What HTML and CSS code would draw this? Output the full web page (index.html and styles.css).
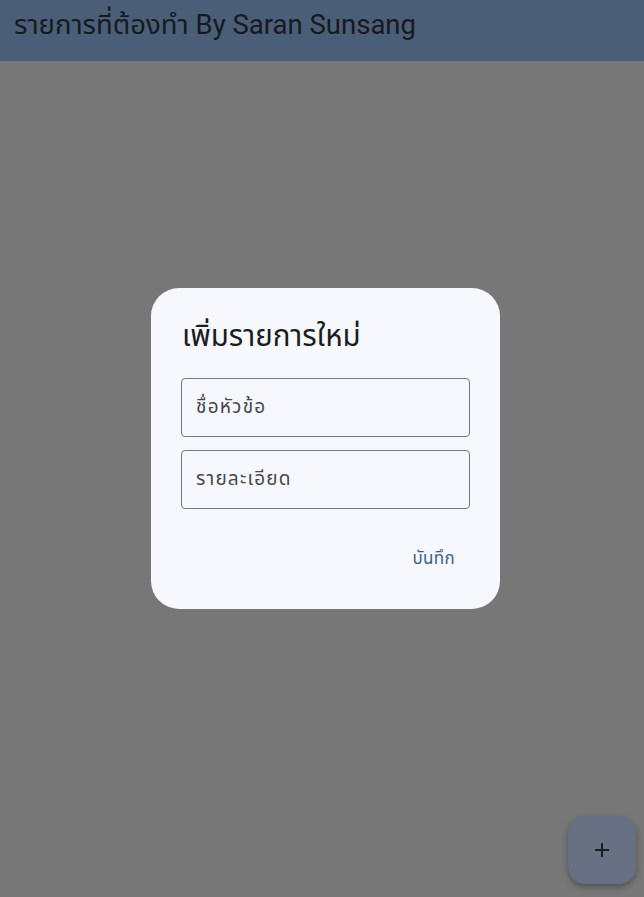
FILE: index.html
```html
<!DOCTYPE html>
<html lang="th">
<head>
<meta charset="utf-8">
<link rel="stylesheet" href="styles.css">
</head>
<body>
<div class="app">
  <header class="appbar"><span class="appbar-title">รายการที่ต้องทำ By Saran Sunsang</span></header>
  <main class="content"></main>
  <button class="fab" aria-label="add">
    <svg width="24" height="24" viewBox="0 0 24 24"><path d="M19 13h-6v6h-2v-6H5v-2h6V5h2v6h6v2z" fill="#1a1c20"/></svg>
  </button>
  <div class="scrim">
    <div class="dialog">
      <h2 class="dialog-title">เพิ่มรายการใหม่</h2>
      <div class="field"><span class="placeholder">ชื่อหัวข้อ</span></div>
      <div class="field"><span class="placeholder">รายละเอียด</span></div>
      <div class="actions"><button class="text-btn">บันทึก</button></div>
    </div>
  </div>
</div>
</body>
</html>
```
FILE: styles.css
```css
* { box-sizing: border-box; }
html, body { margin: 0; padding: 0; }
body {
  width: 644px;
  height: 897px;
  overflow: hidden;
  font-family: Roboto, "Noto Sans", "Noto Sans Thai", "DejaVu Sans", sans-serif;
  background: #777777;
}
.app {
  position: relative;
  width: 644px;
  height: 897px;
  display: flex;
  flex-direction: column;
}
.appbar {
  height: 61px;
  background: #4b5e77;
  display: flex;
  align-items: flex-start;
  padding: 8px 14px 0;
}
.appbar-title {
  font-size: 27.5px;
  line-height: 34px;
  color: #161a20;
}
.content { flex: 1; background: #777777; }
.fab {
  position: absolute;
  left: 568px;
  top: 816px;
  width: 68px;
  height: 68px;
  border: none;
  border-radius: 17px;
  background: #687084;
  box-shadow: 0 3px 6px rgba(0,0,0,0.3);
  display: flex;
  align-items: center;
  justify-content: center;
  padding: 0;
}
.scrim {
  position: absolute;
  inset: 0;
  display: flex;
  align-items: flex-start;
  justify-content: center;
  padding-top: 288px;
  padding-left: 7px;
}
.dialog {
  width: 349px;
  height: 321px;
  background: #f7f8fe;
  border-radius: 28px;
  padding: 28px 30px 0 30px;
  display: flex;
  flex-direction: column;
}
.dialog-title {
  margin: 0 0 22px 1px;
  font-weight: 400;
  font-size: 29.5px;
  line-height: 40px;
  color: #1a1c20;
}
.field {
  height: 59px;
  border: 1px solid #767880;
  border-radius: 4px;
  display: flex;
  align-items: center;
  padding: 0 14px;
  margin-bottom: 13px;
}
.placeholder {
  font-size: 19px;
  letter-spacing: 1.2px;
  color: #44474e;
}
.actions {
  display: flex;
  justify-content: flex-end;
  padding-top: 20px;
}
.text-btn {
  border: none;
  background: transparent;
  font-family: inherit;
  font-size: 17px;
  letter-spacing: 0.3px;
  color: #3a5d8e;
  padding: 4px 15px;
}
```
